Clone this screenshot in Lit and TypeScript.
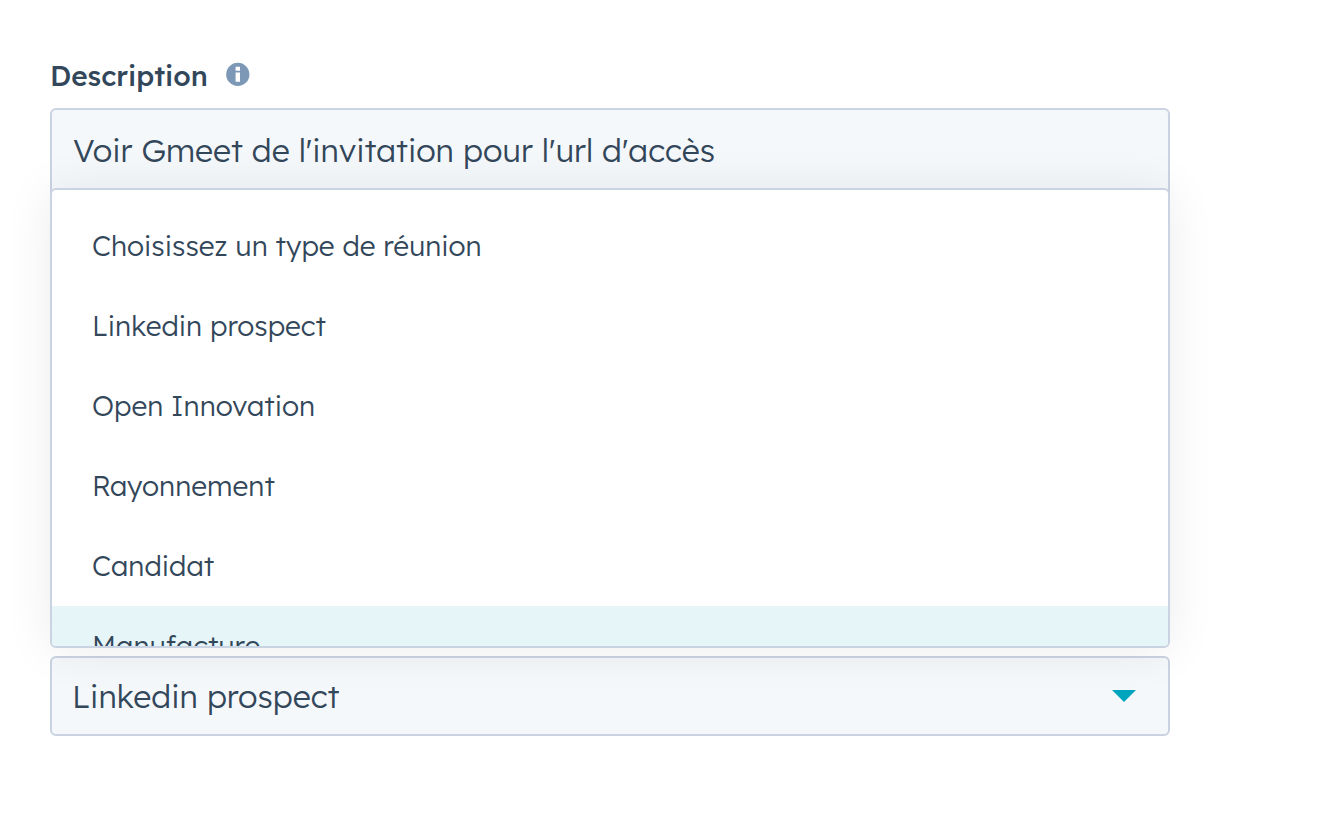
import { LitElement, html, css } from "lit";
import { customElement, state } from "lit/decorators.js";

const MEETING_TYPES = [
  "Choisissez un type de réunion",
  "Linkedin prospect",
  "Open Innovation",
  "Rayonnement",
  "Candidat",
  "Manufacture",
];

@customElement("app-root")
export class AppRoot extends LitElement {
  @state() private selected = "Linkedin prospect";
  @state() private highlighted = "Manufacture";

  static styles = css`
    :host {
      display: block;
      box-sizing: border-box;
      min-height: 100vh;
      padding: 56px 154px 56px 50px;
      background: #ffffff;
      color: #33475b;
      font-family: "Lexend Deca", Inter, "Liberation Sans", sans-serif;
      font-weight: 300;
    }
    *,
    *::before,
    *::after {
      box-sizing: border-box;
    }
    .label-row {
      display: flex;
      align-items: center;
      gap: 18px;
      height: 40px;
      margin-bottom: 12px;
    }
    .label {
      font-size: 28px;
      font-weight: 500;
      line-height: 40px;
    }
    .info {
      display: flex;
      padding: 0;
      border: 0;
      background: none;
      margin-bottom: 4px;
    }
    .control {
      display: block;
      width: 100%;
      margin: 0;
      border: 2px solid #cad3e2;
      border-radius: 6px;
      background: #f5f8fa;
      color: inherit;
      font-family: inherit;
      font-weight: inherit;
      font-size: 32px;
      line-height: 40px;
      outline: none;
    }
    .description {
      height: 480px;
      padding: 20px 21px;
      resize: none;
    }
    .picker {
      position: relative;
      display: grid;
      align-items: center;
      margin-top: 68px;
    }
    .picker > .type,
    .picker > .caret {
      grid-area: 1 / 1;
    }
    .type {
      height: 80px;
      padding: 0 64px 0 20px;
      appearance: none;
    }
    .caret {
      justify-self: end;
      margin-right: 34px;
      pointer-events: none;
    }
    .menu {
      position: absolute;
      left: 0;
      right: 0;
      bottom: calc(100% + 8px);
      height: 460px;
      padding-top: 16px;
      overflow: hidden;
      border: 2px solid #cad3e2;
      border-radius: 6px;
      background: #ffffff;
      box-shadow: 0 2px 48px rgba(0, 0, 0, 0.08);
    }
    .option {
      display: block;
      width: 100%;
      padding: 20px 40px;
      border: 0;
      background: none;
      color: inherit;
      font-family: inherit;
      font-weight: inherit;
      font-size: 28px;
      line-height: 40px;
      text-align: left;
    }
    .option.active {
      background: #e5f5f8;
    }
  `;

  render() {
    return html`
      <div class="label-row">
        <label class="label" for="description">Description</label>
        <button class="info" type="button" aria-label="Information">
          <svg width="24" height="24" viewBox="0 0 24 24" aria-hidden="true">
            <circle cx="11.8" cy="12.4" r="11.6" fill="#7c98b6" />
            <path d="M9.6 4.8h4.4v4H9.6zM9.6 10.6h4.4v9.2H9.6z" fill="#ffffff" />
          </svg>
        </button>
      </div>
      <textarea
        id="description"
        class="control description"
        spellcheck="false"
        .value=${"Voir Gmeet de l'invitation pour l'url d'accès"}
      ></textarea>
      <div class="picker">
        <select
          class="control type"
          aria-label="Type de réunion"
          @change=${(e: Event) => (this.selected = (e.target as HTMLSelectElement).value)}
        >
          ${MEETING_TYPES.map(
            (t) => html`<option value=${t} ?selected=${t === this.selected}>${t}</option>`
          )}
        </select>
        <svg class="caret" width="24" height="12" viewBox="0 0 24 12" aria-hidden="true">
          <path d="M0 0h24L12 12z" fill="#00a4bd" />
        </svg>
        <div class="menu" role="listbox" aria-label="Type de réunion">
          ${MEETING_TYPES.map(
            (t) => html`<button
              type="button"
              role="option"
              aria-selected=${t === this.selected}
              class="option ${t === this.highlighted ? "active" : ""}"
              @mouseenter=${() => (this.highlighted = t)}
              @click=${() => (this.selected = t)}
            >${t}</button>`
          )}
        </div>
      </div>
    `;
  }
}
